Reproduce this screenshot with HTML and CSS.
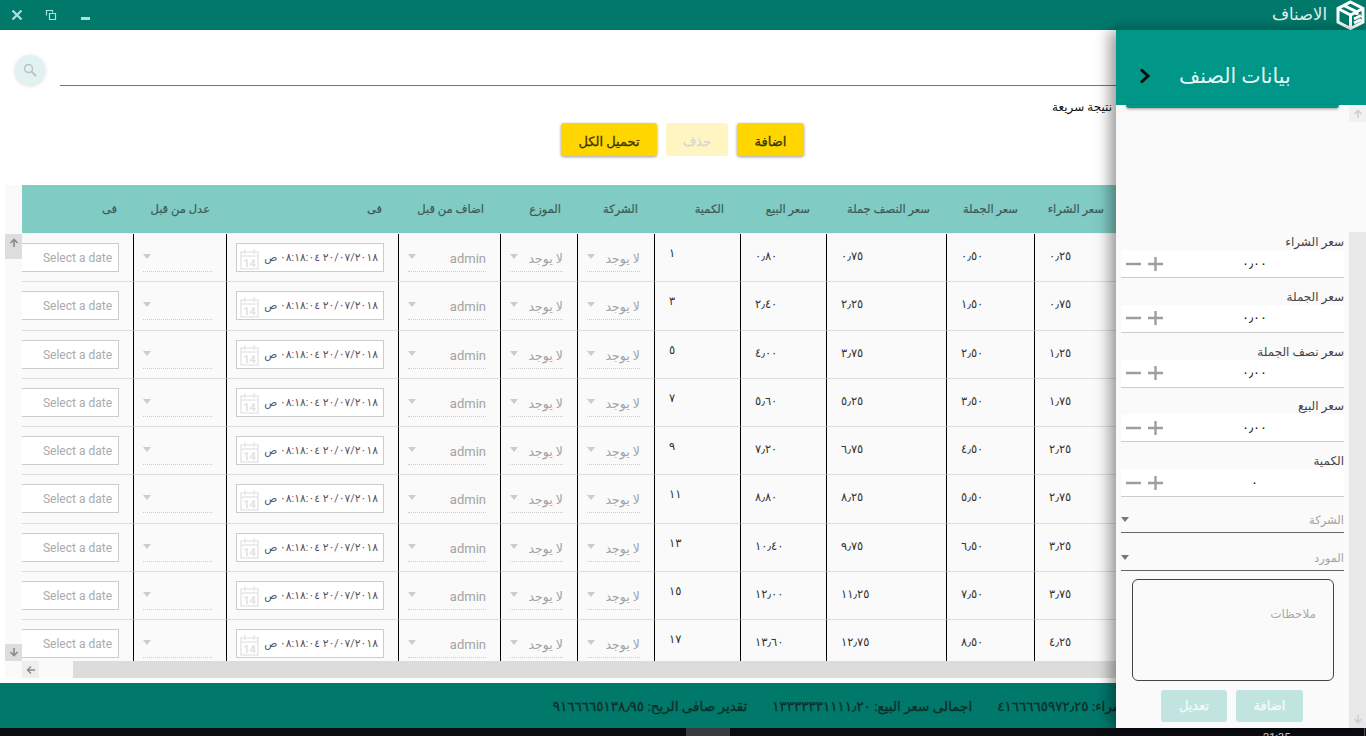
FILE: index.html
```html
<!DOCTYPE html>
<html lang="ar">
<head>
<meta charset="utf-8">
<title>الاصناف</title>
<link rel="stylesheet" href="styles.css">
</head>
<body>
<div class="app">
  <header class="topbar">
    <div class="winctl">
      <svg class="wi" width="34" height="30" viewBox="0 0 34 30"><path d="M12.500 10.500l9 9M21.500 10.500l-9 9" stroke="#b2dfdb" stroke-width="2.200" fill="none"/></svg>
      <svg class="wi" width="34" height="30" viewBox="0 0 34 30"><path d="M12.500 15.500v-5h6v2M15.500 13.500h6v6h-6z" stroke="#b2dfdb" stroke-width="1.200" fill="none"/></svg>
      <svg class="wi" width="34" height="30" viewBox="0 0 34 30"><path d="M13 18.500h9" stroke="#b2dfdb" stroke-width="3" fill="none"/></svg>
    </div>
    <div class="brand">
      <span class="brand-title">الاصناف</span>
      <svg width="31" height="30" viewBox="0 0 31 30"><path d="M15.500 2L28 8.500V22L15.500 28.500L3 22V8.500Z M3 8.500L15.500 15L28 8.500 M15.500 15V28.500 M9 5.500L22 12V15 M19 19L26 15.500M19 23L26 19.500" fill="none" stroke="#fff" stroke-width="3"/></svg>
    </div>
  </header>

  <main class="main">
    <div class="search-row">
      <button class="search-btn" aria-label="بحث">
        <svg width="14" height="14" viewBox="0 0 14 14"><circle cx="5.500" cy="5.500" r="4" fill="none" stroke="#bdbdbd" stroke-width="1.300"/><path d="M8.500 8.500L13 13" stroke="#bdbdbd" stroke-width="1.800"/></svg>
      </button>
      <div class="search-line"></div>
    </div>
    <div class="quick">نتيجة سريعة</div>
    <div class="actions">
      <button class="btn btn-load">تحميل الكل</button>
      <button class="btn btn-del">حذف</button>
      <button class="btn btn-add">اضافة</button>
    </div>

    <section class="grid-shell">
      <div class="vbar">
        <div class="vhead"></div>
        <div class="varrow"><svg width="10" height="10" viewBox="0 0 10 10"><path d="M5 9V2M1.500 5L5 1.500L8.500 5" fill="none" stroke="#8a8a8a" stroke-width="1.600"/></svg></div>
        <div class="vtrack"></div>
        <div class="varrow varrow-b"><svg width="10" height="10" viewBox="0 0 10 10"><path d="M5 1V8M1.500 5L5 8.500L8.500 5" fill="none" stroke="#8a8a8a" stroke-width="1.600"/></svg></div>
      </div>
      <div class="grid-clip">
        <table class="grid" dir="rtl">
          <colgroup>
            <col class="c86"><col class="c88"><col class="c120"><col class="c86"><col class="c86"><col class="c77"><col class="c77"><col class="c102"><col class="c172"><col class="c93"><col class="c111">
          </colgroup>
          <thead>
            <tr>
              <th>سعر الشراء</th><th>سعر الجملة</th><th>سعر النصف جملة</th><th>سعر البيع</th><th>الكمية</th><th>الشركة</th><th>الموزع</th><th>اضاف من قبل</th><th>فى</th><th>عدل من قبل</th><th>فى</th>
            </tr>
          </thead>
          <tbody>
            <tr><td class="num">٠٫٢٥</td><td class="num">٠٫٥٠</td><td class="num">٠٫٧٥</td><td class="num">٠٫٨٠</td><td class="num qty">١</td><td class="cs"><div class="sel"><span class="caret"></span><span>لا يوجد</span></div></td><td class="cs"><div class="sel"><span class="caret"></span><span>لا يوجد</span></div></td><td class="cs"><div class="sel"><span class="caret"></span><span class="lat">admin</span></div></td><td class="cd"><div class="date"><span class="dt">٢٠/٠٧/٢٠١٨ ٠٨:١٨:٠٤ ص</span><svg class="cal" width="19" height="22" viewBox="0 0 19 22"><path d="M1 4h17v17H1zM1 8h17M5 1v5M14 1v5" fill="none" stroke="#e8e8e8" stroke-width="1.600"/><text x="9.500" y="18.500" text-anchor="middle" class="calt">14</text></svg></div></td><td class="cs"><div class="sel sel-e"><span class="caret"></span></div></td><td class="cl"><div class="pick">Select a date</div></td></tr>
            <tr><td class="num">٠٫٧٥</td><td class="num">١٫٥٠</td><td class="num">٢٫٢٥</td><td class="num">٢٫٤٠</td><td class="num qty">٣</td><td class="cs"><div class="sel"><span class="caret"></span><span>لا يوجد</span></div></td><td class="cs"><div class="sel"><span class="caret"></span><span>لا يوجد</span></div></td><td class="cs"><div class="sel"><span class="caret"></span><span class="lat">admin</span></div></td><td class="cd"><div class="date"><span class="dt">٢٠/٠٧/٢٠١٨ ٠٨:١٨:٠٤ ص</span><svg class="cal" width="19" height="22" viewBox="0 0 19 22"><path d="M1 4h17v17H1zM1 8h17M5 1v5M14 1v5" fill="none" stroke="#e8e8e8" stroke-width="1.600"/><text x="9.500" y="18.500" text-anchor="middle" class="calt">14</text></svg></div></td><td class="cs"><div class="sel sel-e"><span class="caret"></span></div></td><td class="cl"><div class="pick">Select a date</div></td></tr>
            <tr><td class="num">١٫٢٥</td><td class="num">٢٫٥٠</td><td class="num">٣٫٧٥</td><td class="num">٤٫٠٠</td><td class="num qty">٥</td><td class="cs"><div class="sel"><span class="caret"></span><span>لا يوجد</span></div></td><td class="cs"><div class="sel"><span class="caret"></span><span>لا يوجد</span></div></td><td class="cs"><div class="sel"><span class="caret"></span><span class="lat">admin</span></div></td><td class="cd"><div class="date"><span class="dt">٢٠/٠٧/٢٠١٨ ٠٨:١٨:٠٤ ص</span><svg class="cal" width="19" height="22" viewBox="0 0 19 22"><path d="M1 4h17v17H1zM1 8h17M5 1v5M14 1v5" fill="none" stroke="#e8e8e8" stroke-width="1.600"/><text x="9.500" y="18.500" text-anchor="middle" class="calt">14</text></svg></div></td><td class="cs"><div class="sel sel-e"><span class="caret"></span></div></td><td class="cl"><div class="pick">Select a date</div></td></tr>
            <tr><td class="num">١٫٧٥</td><td class="num">٣٫٥٠</td><td class="num">٥٫٢٥</td><td class="num">٥٫٦٠</td><td class="num qty">٧</td><td class="cs"><div class="sel"><span class="caret"></span><span>لا يوجد</span></div></td><td class="cs"><div class="sel"><span class="caret"></span><span>لا يوجد</span></div></td><td class="cs"><div class="sel"><span class="caret"></span><span class="lat">admin</span></div></td><td class="cd"><div class="date"><span class="dt">٢٠/٠٧/٢٠١٨ ٠٨:١٨:٠٤ ص</span><svg class="cal" width="19" height="22" viewBox="0 0 19 22"><path d="M1 4h17v17H1zM1 8h17M5 1v5M14 1v5" fill="none" stroke="#e8e8e8" stroke-width="1.600"/><text x="9.500" y="18.500" text-anchor="middle" class="calt">14</text></svg></div></td><td class="cs"><div class="sel sel-e"><span class="caret"></span></div></td><td class="cl"><div class="pick">Select a date</div></td></tr>
            <tr><td class="num">٢٫٢٥</td><td class="num">٤٫٥٠</td><td class="num">٦٫٧٥</td><td class="num">٧٫٢٠</td><td class="num qty">٩</td><td class="cs"><div class="sel"><span class="caret"></span><span>لا يوجد</span></div></td><td class="cs"><div class="sel"><span class="caret"></span><span>لا يوجد</span></div></td><td class="cs"><div class="sel"><span class="caret"></span><span class="lat">admin</span></div></td><td class="cd"><div class="date"><span class="dt">٢٠/٠٧/٢٠١٨ ٠٨:١٨:٠٤ ص</span><svg class="cal" width="19" height="22" viewBox="0 0 19 22"><path d="M1 4h17v17H1zM1 8h17M5 1v5M14 1v5" fill="none" stroke="#e8e8e8" stroke-width="1.600"/><text x="9.500" y="18.500" text-anchor="middle" class="calt">14</text></svg></div></td><td class="cs"><div class="sel sel-e"><span class="caret"></span></div></td><td class="cl"><div class="pick">Select a date</div></td></tr>
            <tr><td class="num">٢٫٧٥</td><td class="num">٥٫٥٠</td><td class="num">٨٫٢٥</td><td class="num">٨٫٨٠</td><td class="num qty">١١</td><td class="cs"><div class="sel"><span class="caret"></span><span>لا يوجد</span></div></td><td class="cs"><div class="sel"><span class="caret"></span><span>لا يوجد</span></div></td><td class="cs"><div class="sel"><span class="caret"></span><span class="lat">admin</span></div></td><td class="cd"><div class="date"><span class="dt">٢٠/٠٧/٢٠١٨ ٠٨:١٨:٠٤ ص</span><svg class="cal" width="19" height="22" viewBox="0 0 19 22"><path d="M1 4h17v17H1zM1 8h17M5 1v5M14 1v5" fill="none" stroke="#e8e8e8" stroke-width="1.600"/><text x="9.500" y="18.500" text-anchor="middle" class="calt">14</text></svg></div></td><td class="cs"><div class="sel sel-e"><span class="caret"></span></div></td><td class="cl"><div class="pick">Select a date</div></td></tr>
            <tr><td class="num">٣٫٢٥</td><td class="num">٦٫٥٠</td><td class="num">٩٫٧٥</td><td class="num">١٠٫٤٠</td><td class="num qty">١٣</td><td class="cs"><div class="sel"><span class="caret"></span><span>لا يوجد</span></div></td><td class="cs"><div class="sel"><span class="caret"></span><span>لا يوجد</span></div></td><td class="cs"><div class="sel"><span class="caret"></span><span class="lat">admin</span></div></td><td class="cd"><div class="date"><span class="dt">٢٠/٠٧/٢٠١٨ ٠٨:١٨:٠٤ ص</span><svg class="cal" width="19" height="22" viewBox="0 0 19 22"><path d="M1 4h17v17H1zM1 8h17M5 1v5M14 1v5" fill="none" stroke="#e8e8e8" stroke-width="1.600"/><text x="9.500" y="18.500" text-anchor="middle" class="calt">14</text></svg></div></td><td class="cs"><div class="sel sel-e"><span class="caret"></span></div></td><td class="cl"><div class="pick">Select a date</div></td></tr>
            <tr><td class="num">٣٫٧٥</td><td class="num">٧٫٥٠</td><td class="num">١١٫٢٥</td><td class="num">١٢٫٠٠</td><td class="num qty">١٥</td><td class="cs"><div class="sel"><span class="caret"></span><span>لا يوجد</span></div></td><td class="cs"><div class="sel"><span class="caret"></span><span>لا يوجد</span></div></td><td class="cs"><div class="sel"><span class="caret"></span><span class="lat">admin</span></div></td><td class="cd"><div class="date"><span class="dt">٢٠/٠٧/٢٠١٨ ٠٨:١٨:٠٤ ص</span><svg class="cal" width="19" height="22" viewBox="0 0 19 22"><path d="M1 4h17v17H1zM1 8h17M5 1v5M14 1v5" fill="none" stroke="#e8e8e8" stroke-width="1.600"/><text x="9.500" y="18.500" text-anchor="middle" class="calt">14</text></svg></div></td><td class="cs"><div class="sel sel-e"><span class="caret"></span></div></td><td class="cl"><div class="pick">Select a date</div></td></tr>
            <tr><td class="num">٤٫٢٥</td><td class="num">٨٫٥٠</td><td class="num">١٢٫٧٥</td><td class="num">١٣٫٦٠</td><td class="num qty">١٧</td><td class="cs"><div class="sel"><span class="caret"></span><span>لا يوجد</span></div></td><td class="cs"><div class="sel"><span class="caret"></span><span>لا يوجد</span></div></td><td class="cs"><div class="sel"><span class="caret"></span><span class="lat">admin</span></div></td><td class="cd"><div class="date"><span class="dt">٢٠/٠٧/٢٠١٨ ٠٨:١٨:٠٤ ص</span><svg class="cal" width="19" height="22" viewBox="0 0 19 22"><path d="M1 4h17v17H1zM1 8h17M5 1v5M14 1v5" fill="none" stroke="#e8e8e8" stroke-width="1.600"/><text x="9.500" y="18.500" text-anchor="middle" class="calt">14</text></svg></div></td><td class="cs"><div class="sel sel-e"><span class="caret"></span></div></td><td class="cl"><div class="pick">Select a date</div></td></tr>
          </tbody>
        </table>
      </div>
      <div class="hbar">
        <div class="hcorner"></div>
        <div class="harrow"><svg width="10" height="10" viewBox="0 0 10 10"><path d="M9 5H2M5 1.500L1.500 5L5 8.500" fill="none" stroke="#8a8a8a" stroke-width="1.400"/></svg></div>
        <div class="hgap"></div>
        <div class="hthumb"></div>
      </div>
    </section>

    <footer class="totals" dir="rtl">
      <span>اجمالى سعر الشراء: ٤١٦٦٦٦٥٩٧٢٫٢٥</span>
      <span>اجمالى سعر البيع: ١٣٣٣٣٣٣١١١١٫٢٠</span>
      <span>تقدير صافى الربح: ٩١٦٦٦٦٥١٣٨٫٩٥</span>
    </footer>
  </main>

  <div class="taskbar"><span class="task-btn"></span><span class="task-time">21:35</span><span class="task-line"></span></div>

  <aside class="panel">
    <div class="panel-head">
      <svg class="chev" width="12" height="16" viewBox="0 0 12 16"><path d="M2 1.500L9 8L2 14.500" fill="none" stroke="#0b0b0b" stroke-width="3"/></svg>
      <h2 class="panel-title">بيانات الصنف</h2>
    </div>
    <div class="panel-lip"></div>
    <div class="panel-body">
      <form class="form" dir="rtl">
        <div class="field"><div class="lbl">سعر الشراء</div><div class="stepper"><span class="val">٠٫٠٠</span><svg class="pm" width="37" height="14" viewBox="0 0 37 14"><path d="M0 7H15M22 7H37M29.500 0V14" fill="none" stroke="#9e9e9e" stroke-width="2.400"/></svg></div></div>
        <div class="field"><div class="lbl">سعر الجملة</div><div class="stepper"><span class="val">٠٫٠٠</span><svg class="pm" width="37" height="14" viewBox="0 0 37 14"><path d="M0 7H15M22 7H37M29.500 0V14" fill="none" stroke="#9e9e9e" stroke-width="2.400"/></svg></div></div>
        <div class="field"><div class="lbl">سعر نصف الجملة</div><div class="stepper"><span class="val">٠٫٠٠</span><svg class="pm" width="37" height="14" viewBox="0 0 37 14"><path d="M0 7H15M22 7H37M29.500 0V14" fill="none" stroke="#9e9e9e" stroke-width="2.400"/></svg></div></div>
        <div class="field"><div class="lbl">سعر البيع</div><div class="stepper"><span class="val">٠٫٠٠</span><svg class="pm" width="37" height="14" viewBox="0 0 37 14"><path d="M0 7H15M22 7H37M29.500 0V14" fill="none" stroke="#9e9e9e" stroke-width="2.400"/></svg></div></div>
        <div class="field"><div class="lbl">الكمية</div><div class="stepper"><span class="val">٠</span><svg class="pm" width="37" height="14" viewBox="0 0 37 14"><path d="M0 7H15M22 7H37M29.500 0V14" fill="none" stroke="#9e9e9e" stroke-width="2.400"/></svg></div></div>
        <div class="drop"><span>الشركة</span><span class="caret caret-d"></span></div>
        <div class="drop"><span>المورد</span><span class="caret caret-d"></span></div>
        <div class="notes"><span>ملاحظات</span></div>
        <div class="form-actions">
          <button type="button" class="btn-off">اضافة</button>
          <button type="button" class="btn-off">تعديل</button>
        </div>
      </form>
      <div class="pbar">
        <div class="parrow"><svg width="10" height="10" viewBox="0 0 10 10"><path d="M5 9V2M1.500 5L5 1.500L8.500 5" fill="none" stroke="#cfcfcf" stroke-width="1.600"/></svg></div>
        <div class="pgap"></div>
        <div class="pthumb"><svg width="10" height="10" viewBox="0 0 10 10"><path d="M5 1V8M1.500 5L5 8.500L8.500 5" fill="none" stroke="#cfcfcf" stroke-width="1.600"/></svg></div>
      </div>
    </div>
  </aside>
</div>
</body>
</html>
```
FILE: styles.css
```css
* { box-sizing: border-box; }
html, body { margin: 0; padding: 0; }
body { font-family: Roboto, "DejaVu Sans", sans-serif; background: #fff; overflow: hidden; }

.app { position: relative; width: 1366px; height: 736px; display: flex; flex-direction: column; overflow: hidden; }

/* top bar */
.topbar { height: 30px; flex: none; background: #00796b; display: flex; justify-content: space-between; }
.winctl { display: flex; }
.wi { display: block; }
.brand { display: flex; align-items: center; gap: 8px; }
.brand-title { color: #e0f2f1; font-size: 16.500px; line-height: 30px; }

/* main */
.main { flex: 1; min-height: 0; display: flex; flex-direction: column; }
.search-row { height: 69px; flex: none; display: flex; padding: 25px 0 0 15px; }
.search-btn { width: 30px; height: 30px; padding: 0; border: 0; border-radius: 50%; background: #e0f2f1; box-shadow: 0 1px 4px rgba(0,0,0,.15); display: flex; align-items: center; justify-content: center; }
.search-line { flex: 1; height: 31px; margin-left: 15px; border-bottom: 1px solid #757575; }
.quick { height: 24px; flex: none; padding-left: 1052px; font-size: 12px; line-height: 17px; color: #111; white-space: nowrap; }
.actions { height: 62px; flex: none; display: flex; padding-left: 561px; }
.btn { height: 33px; border: 0; border-radius: 3px; font-family: inherit; font-size: 13px; font-weight: 400; -webkit-text-stroke: .3px; padding: 3px 0 0; background: #ffd600; color: #3e3500; box-shadow: 0 1px 3px rgba(0,0,0,.4); }
.btn-load { width: 96px; margin-right: 9px; }
.btn-del { width: 62px; margin-right: 9px; background: #fff5c2; color: #d6d6d6; box-shadow: none; }
.btn-add { width: 67px; }

/* grid */
.grid-shell { flex: none; margin-left: 5px; width: 1361px; display: grid; grid-template-columns: 17px 1094px; grid-template-rows: 476px 17px; }
.vbar { display: flex; flex-direction: column; background: #fafafa; }
.vhead { height: 49px; flex: none; }
.varrow { height: 25px; flex: none; background: #ddd; display: flex; justify-content: center; padding-top: 4px; }
.varrow-b { height: 17px; padding-top: 3px; }
.vtrack { flex: 1; }
.grid-clip { overflow: hidden; height: 476px; }
.grid { table-layout: fixed; width: 1098px; border-collapse: separate; border-spacing: 0; background: #fafafa; }
.c86 { width: 86px; } .c88 { width: 88px; } .c120 { width: 120px; } .c77 { width: 77px; }
.c102 { width: 102px; } .c172 { width: 172px; } .c93 { width: 93px; } .c111 { width: 111px; }
.grid th { height: 49px; padding: 0 16px 0 0; background: #80cbc4; border-bottom: 1px solid #e8f5f3; text-align: right; font-size: 11.500px; font-weight: 400; -webkit-text-stroke: .2px; color: #3f5a58; white-space: nowrap; }
.grid td { height: 48.250px; padding: 0; vertical-align: top; border-left: 1px solid #000; border-bottom: 1px solid #ddd; overflow: hidden; }
.grid td.cl { border-left: 0; }
.num { font-size: 11.500px; line-height: 16px; color: #333; text-align: left; }
.grid td.num { padding: 14px 0 0 14px; }
.grid td.qty { padding-top: 11px; }

.grid td.cs { padding: 9px 14px 0 9px; }
.sel { height: 29px; display: flex; justify-content: space-between; align-items: center; border-bottom: 1px dotted #ccc; font-size: 12.500px; color: #a3a3a3; flex-direction: row-reverse; white-space: nowrap; }
.sel span:last-child:not(.caret) { margin-top: 3px; }
.sel-e { flex-direction: row; justify-content: flex-end; }
.lat { font-size: 13px; }
.caret { width: 0; height: 0; flex: none; border-style: solid; border-width: 5px 4px 0; border-color: #ccc transparent transparent; margin-bottom: 1px; }
.grid td.cd { padding: 9px 14px 0 9px; }
.date { height: 29px; background: #fff; border: 1px solid #ccc; display: flex; align-items: center; justify-content: space-between; padding: 0 5px 0 3px; }
.dt { font-size: 10.800px; color: #556; white-space: nowrap; }
.cal { display: block; flex: none; margin-top: 2px; }
.calt { font: 700 11px Roboto, sans-serif; fill: #e2e2e2; }
.grid td.cl { padding: 9px 14px 0 0; }
.pick { height: 29px; background: #fff; border: 1px solid #ccc; border-left: 0; direction: rtl; text-align: right; padding-right: 6px; font-size: 12px; line-height: 29px; color: #aaa; white-space: nowrap; }

.hbar { grid-column: 1 / 3; display: flex; background: #fafafa; }
.hcorner { width: 17px; flex: none; }
.harrow { width: 17px; flex: none; background: #eee; display: flex; align-items: center; justify-content: center; }
.hgap { width: 34px; flex: none; }
.hthumb { flex: 1; background: #dcdcdc; }

/* totals */
.totals { flex: none; height: 45px; margin-top: 5px; background: #00796b; display: flex; padding-right: 162px; gap: 25px; align-items: center; justify-content: flex-start; overflow: hidden; font-size: 13.500px; font-weight: 400; -webkit-text-stroke: .3px; color: #0d2d28; white-space: nowrap; }

/* task bar */
.taskbar { height: 8px; flex: none; background: #0a0c10; display: flex; overflow: hidden; padding-left: 686px; }
.task-btn { width: 44px; height: 8px; background: #3a3a3e; }
.task-time { width: 31px; margin-left: 533px; font-size: 11px; line-height: 13px; padding-top: 3px; color: #ddd; }
.task-line { width: 1px; margin-left: 70px; background: #555; }

/* side panel */
.panel { position: absolute; left: 1116px; top: 30px; width: 250px; height: 698px; background: #fafafa; box-shadow: -6px 0 14px rgba(0,0,0,.4); display: flex; flex-direction: column; }
.panel-head { height: 75px; flex: none; background: #009688; display: flex; align-items: center; padding: 17px 0 0 23px; }
.chev { display: block; flex: none; }
.panel-title { margin: 0 0 0 28px; font-size: 20.500px; font-weight: 400; color: #e8f5f3; white-space: nowrap; }
.panel-lip { height: 3px; flex: none; margin: 0 27px 0 10px; background: #009688; border-radius: 0 0 3px 3px; box-shadow: 0 1px 3px rgba(0,0,0,.4); position: relative; z-index: 1; margin-bottom: -3px; }
.panel-body { flex: 1; min-height: 0; display: flex; }
.form { flex: none; width: 233px; padding: 123px 5px 0; }
.field { height: 54.750px; }
.lbl { height: 22px; text-align: right; font-size: 12px; line-height: 29px; color: #444; white-space: nowrap; }
.stepper { height: 28px; background: #fff; border-bottom: 1px solid #ccc; display: flex; align-items: center; padding: 0 0 0 5px; position: relative; direction: rtl; }
.val { position: absolute; left: 44px; right: 0; text-align: center; font-size: 13px; line-height: 28px; color: #111; }
.pm { display: block; margin: 0 auto 0 0; }
.drop { height: 30px; display: flex; justify-content: space-between; align-items: center; border-bottom: 1px solid #666; font-size: 11.500px; color: #a3a3a3; margin-bottom: 8px; padding-top: 5px; }
.field + .drop { margin-top: 1px; }
.caret-d { border-color: #777 transparent transparent; margin-bottom: 0; }
.notes { height: 102px; margin: 3px 10px 0 11px; border: 1px solid #444; border-radius: 6px; padding: 27px 17px 0 0; font-size: 12px; color: #aaa; }
.form-actions { display: flex; gap: 9px; padding: 9px 41px 0 0; }
.btn-off { height: 32px; border: 0; border-radius: 3px; background: #c2e4e0; color: #f2fbfa; font-family: inherit; font-size: 13px; font-weight: 400; -webkit-text-stroke: .3px; padding: 0; width: 67px; }
.btn-off + .btn-off { width: 66px; }
.pbar { flex: 1; display: flex; flex-direction: column; }
.parrow { height: 17px; flex: none; background: #f1f1f1; display: flex; justify-content: center; align-items: center; }
.pgap { height: 110px; flex: none; }
.pthumb { flex: 1; background: #e8e8e8; display: flex; justify-content: center; align-items: flex-end; padding-bottom: 4px; }
```
